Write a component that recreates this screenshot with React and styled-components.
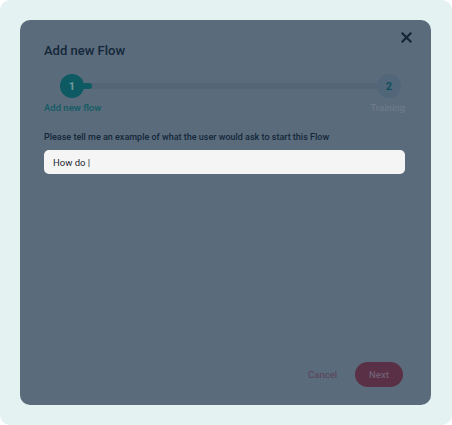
import React, { useState } from 'react';
import styled, { createGlobalStyle } from 'styled-components';

const GlobalStyle = createGlobalStyle`
  html, body {
    margin: 0;
    padding: 0;
    background: #ffffff;
  }
  body {
    font-family: Roboto, "Noto Sans", "Liberation Sans", sans-serif;
  }
  * { box-sizing: border-box; }
`;

const Page = styled.div`
  width: 452px;
  height: 425px;
  background: #e4f2f1;
  border-radius: 10px;
  padding: 20px 21px 20px 20px;
`;

const Dialog = styled.div`
  height: 385px;
  background: #5a6b7b;
  border-radius: 10px;
  padding: 22px 26px 18px 24px;
  display: flex;
  flex-direction: column;
`;

const Header = styled.div`
  display: flex;
  justify-content: space-between;
  align-items: flex-start;
`;

const Title = styled.h2`
  margin: 1px 0 0;
  font-size: 13px;
  font-weight: 500;
  color: #14273a;
  line-height: 16px;
`;

const CloseButton = styled.button`
  border: none;
  background: none;
  padding: 0;
  margin: -15px -11px 0 0;
  width: 20px;
  height: 20px;
  display: flex;
  align-items: center;
  justify-content: center;
  cursor: pointer;
`;

const Stepper = styled.div`
  margin-top: 15px;
  display: flex;
  flex-direction: column;
`;

const TrackRow = styled.div`
  display: flex;
  align-items: center;
  padding: 0 4px 0 16px;
`;

const Circle = styled.div`
  position: relative;
  z-index: 1;
  width: 24px;
  height: 24px;
  border-radius: 50%;
  display: flex;
  align-items: center;
  justify-content: center;
  font-size: 11px;
  font-weight: 700;
  background: ${p => (p.$active ? '#0e5a62' : '#52667a')};
  color: ${p => (p.$active ? '#6f9aa0' : '#0f4f5c')};
  flex-shrink: 0;
`;

const Bar = styled.div`
  flex: 1;
  height: 6px;
  margin: 0 -2px;
  background: #536577;
  border-radius: 3px;
  display: flex;
`;

const Fill = styled.div`
  height: 6px;
  border-radius: 0 3px 3px 0;
  background: #0e5a62;
`;

const Labels = styled.div`
  display: flex;
  justify-content: space-between;
  margin-top: 4px;
`;

const StepLabel = styled.span`
  font-size: 9.5px;
  font-weight: 500;
  color: ${p => (p.$active ? '#115c63' : '#6e7a87')};
`;

const FieldLabel = styled.label`
  display: block;
  margin-top: 19px;
  font-size: 9px;
  font-weight: 500;
  color: #14273a;
`;

const Input = styled.input`
  display: block;
  margin-top: 8px;
  width: 100%;
  height: 24px;
  border: none;
  outline: none;
  border-radius: 5px;
  background: #f5f5f5;
  padding: 0 9px;
  font-family: inherit;
  font-size: 9.5px;
  color: #1a2433;
`;

const Footer = styled.div`
  margin-top: auto;
  display: flex;
  justify-content: flex-end;
  align-items: center;
  gap: 18px;
  padding-right: 2px;
`;

const TextButton = styled.button`
  border: none;
  background: none;
  padding: 0;
  font-family: inherit;
  font-size: 9.5px;
  color: #5b3f57;
  cursor: pointer;
`;

const PillButton = styled.button`
  border: none;
  width: 48px;
  height: 25px;
  border-radius: 13px;
  background: #5a3046;
  color: #706074;
  font-family: inherit;
  font-size: 9.5px;
  font-weight: 500;
`;

export default function App() {
  const [question, setQuestion] = useState('How do |');

  return (
    <>
      <GlobalStyle />
      <Page>
        <Dialog>
          <Header>
            <Title>Add new Flow</Title>
            <CloseButton aria-label="Close">
              <svg width="11" height="11" viewBox="0 0 11 11">
                <path d="M1.5 1.5 L9.5 9.5 M9.5 1.5 L1.5 9.5" stroke="#14273a" strokeWidth="2.2" strokeLinecap="square" />
              </svg>
            </CloseButton>
          </Header>

          <Stepper>
            <TrackRow>
              <Circle $active>1</Circle>
              <Bar>
                <Fill style={{ width: '10px' }} />
              </Bar>
              <Circle>2</Circle>
            </TrackRow>
            <Labels>
              <StepLabel $active>Add new flow</StepLabel>
              <StepLabel>Training</StepLabel>
            </Labels>
          </Stepper>

          <FieldLabel htmlFor="q">Please tell me an example of what the user would ask to start this Flow</FieldLabel>
          <Input id="q" value={question} onChange={e => setQuestion(e.target.value)} />

          <Footer>
            <TextButton>Cancel</TextButton>
            <PillButton disabled>Next</PillButton>
          </Footer>
        </Dialog>
      </Page>
    </>
  );
}
